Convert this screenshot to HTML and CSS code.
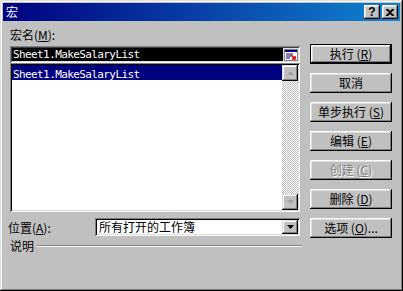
FILE: index.html
```html
<!DOCTYPE html>
<html lang="zh-CN">
<head>
<meta charset="utf-8">
<title>宏</title>
<link rel="stylesheet" href="styles.css">
</head>
<body>
<div class="win">
  <div class="titlebar">
    <span class="title">宏</span>
    <div class="tbtns">
      <span class="tbtn help">?</span>
      <span class="tbtn close"><svg width="8" height="7" viewBox="0 0 8 7"><path d="M0 0h2l2 2 2-2h2v1L5 3.5 8 6v1H6L4 5 2 7H0V6l3-2.5L0 1z" fill="#000"/></svg></span>
    </div>
  </div>
  <div class="main">
    <div class="left">
      <div class="lbl">宏名(<u>M</u>):</div>
      <div class="field">
        <span class="mono">Sheet1.MakeSalaryList</span>
        <span class="collapse"><svg width="14" height="12" viewBox="0 0 14 12"><rect x="0.5" y="0.5" width="13" height="11" fill="#fff" stroke="#808080"/><rect x="1" y="1" width="12" height="2" fill="#000080"/><path d="M2 5h7M2 7h5M2 9h4" stroke="#000080" stroke-width="1"/><path d="M7 6l4 4M11 7v3H8" stroke="#e00000" stroke-width="1.6" fill="none"/></svg></span>
      </div>
      <div class="list">
        <div class="items">
          <div class="item sel"><span class="mono">Sheet1.MakeSalaryList</span></div>
        </div>
        <div class="vscroll">
          <span class="sbtn"><svg width="7" height="4" viewBox="0 0 7 4"><path d="M3.5 0L7 4H0z" fill="#a0a0a0"/></svg></span>
          <span class="track"></span>
          <span class="sbtn"><svg width="7" height="4" viewBox="0 0 7 4"><path d="M0 0h7L3.5 4z" fill="#a0a0a0"/></svg></span>
        </div>
      </div>
      <div class="pos">
        <span class="poslbl">位置(<u>A</u>):</span>
        <div class="combo">
          <span class="ctext">所有打开的工作簿</span>
          <span class="dbtn"><svg width="7" height="4" viewBox="0 0 7 4"><path d="M0 0h7L3.5 4z" fill="#000"/></svg></span>
        </div>
      </div>
      <div class="desc">
        <span>说明</span>
        <span class="etch"></span>
      </div>
    </div>
    <div class="right">
      <span class="btn def">执行 (<u>R</u>)</span>
      <span class="btn">取消</span>
      <span class="btn">单步执行 (<u>S</u>)</span>
      <span class="btn">编辑 (<u>E</u>)</span>
      <span class="btn dis">创建 (<u>C</u>)</span>
      <span class="btn">删除 (<u>D</u>)</span>
      <span class="btn">选项 (<u>O</u>)...</span>
    </div>
  </div>
</div>
</body>
</html>
```
FILE: styles.css
```css
* { box-sizing: border-box; }
html, body { margin: 0; padding: 0; }
body {
  width: 403px;
  height: 291px;
  overflow: hidden;
  font-family: "Noto Sans CJK SC", "Noto Sans", sans-serif;
  font-size: 12px;
  color: #000;
}
.win {
  width: 403px;
  height: 291px;
  background: #c0c0c0;
  padding: 3px;
  box-shadow: inset -1px -1px #000, inset 1px 1px #dfdfdf, inset -2px -2px #808080, inset 2px 2px #fff;
  display: flex;
  flex-direction: column;
}
.titlebar {
  height: 18px;
  background: linear-gradient(90deg, #000080, #1084d0);
  display: flex;
  align-items: center;
  justify-content: space-between;
  padding: 0 2px 0 3px;
}
.title {
  color: #fff;
  line-height: 14px;
}
.tbtns { display: flex; gap: 2px; }
.tbtn {
  width: 16px;
  height: 14px;
  background: #c0c0c0;
  box-shadow: inset -1px -1px #000, inset 1px 1px #fff, inset -2px -2px #808080, inset 2px 2px #dfdfdf;
  display: flex;
  align-items: center;
  justify-content: center;
  font-family: "Liberation Sans", sans-serif;
  font-weight: bold;
  font-size: 12px;
  line-height: 12px;
}
.main {
  display: grid;
  grid-template-columns: 290px 82px;
  column-gap: 10px;
  padding-left: 7px;
  align-items: start;
}
.left { display: flex; flex-direction: column; }
.lbl { margin-top: 7px; height: 13px; line-height: 13px; }
.mono {
  font-family: "DejaVu Sans Mono", monospace;
  font-size: 11px;
  letter-spacing: -0.6px;
}
.field {
  margin-top: 5px;
  height: 17px;
  background: #000;
  color: #fff;
  box-shadow: inset 1px 1px #808080, inset -1px -1px #fff, inset 2px 2px #404040, inset -2px -2px #dfdfdf;
  display: flex;
  align-items: center;
  justify-content: space-between;
  padding: 0 2px 0 3px;
}
.collapse {
  width: 15px;
  height: 13px;
  background: #dfdfdf;
  display: flex;
  align-items: center;
  justify-content: center;
}
.list {
  height: 149px;
  background: #fff;
  box-shadow: inset 1px 1px #808080, inset -1px -1px #fff, inset 2px 2px #000, inset -2px -2px #dfdfdf;
  padding: 2px;
  display: flex;
}
.items { flex: 1; }
.item { height: 15px; line-height: 15px; padding-left: 1px; }
.item.sel { background: #000080; color: #fff; }
.vscroll { width: 16px; display: flex; flex-direction: column; }
.sbtn {
  height: 16px;
  background: #c0c0c0;
  box-shadow: inset -1px -1px #000, inset 1px 1px #dfdfdf, inset -2px -2px #808080, inset 2px 2px #fff;
  display: flex;
  align-items: center;
  justify-content: center;
}
.track {
  flex: 1;
  background: repeating-conic-gradient(#c0c0c0 0 25%, #fff 0 50%) 0 0 / 2px 2px;
}
.pos { margin-top: 6px; display: flex; align-items: center; }
.poslbl { width: 85px; margin-left: -2px; margin-right: 2px; line-height: 13px; }
.combo {
  width: 205px;
  height: 18px;
  background: #fff;
  box-shadow: inset 1px 1px #808080, inset -1px -1px #fff, inset 2px 2px #000, inset -2px -2px #dfdfdf;
  padding: 2px;
  display: flex;
  align-items: center;
}
.ctext { flex: 1; padding-left: 2px; line-height: 14px; }
.dbtn {
  width: 16px;
  height: 14px;
  background: #c0c0c0;
  box-shadow: inset -1px -1px #000, inset 1px 1px #dfdfdf, inset -2px -2px #808080, inset 2px 2px #fff;
  display: flex;
  align-items: center;
  justify-content: center;
}
.desc {
  margin-top: 3px;
  height: 13px;
  line-height: 13px;
  display: flex;
  align-items: center;
  width: 292px;
}
.etch {
  flex: 1;
  margin-left: 3px;
  height: 2px;
  border-top: 1px solid #808080;
  border-bottom: 1px solid #fff;
}
.right {
  padding-top: 23px;
  display: flex;
  flex-direction: column;
  gap: 9px;
}
.btn {
  height: 20px;
  background: #c0c0c0;
  box-shadow: inset -1px -1px #000, inset 1px 1px #fff, inset -2px -2px #808080, inset 2px 2px #dfdfdf;
  display: flex;
  align-items: center;
  justify-content: center;
  line-height: 14px;
}
.btn.def {
  border: 1px solid #000;
}
.btn.dis {
  color: #808080;
  text-shadow: 1px 1px #fff;
}
u { text-underline-offset: 1px; }
```
